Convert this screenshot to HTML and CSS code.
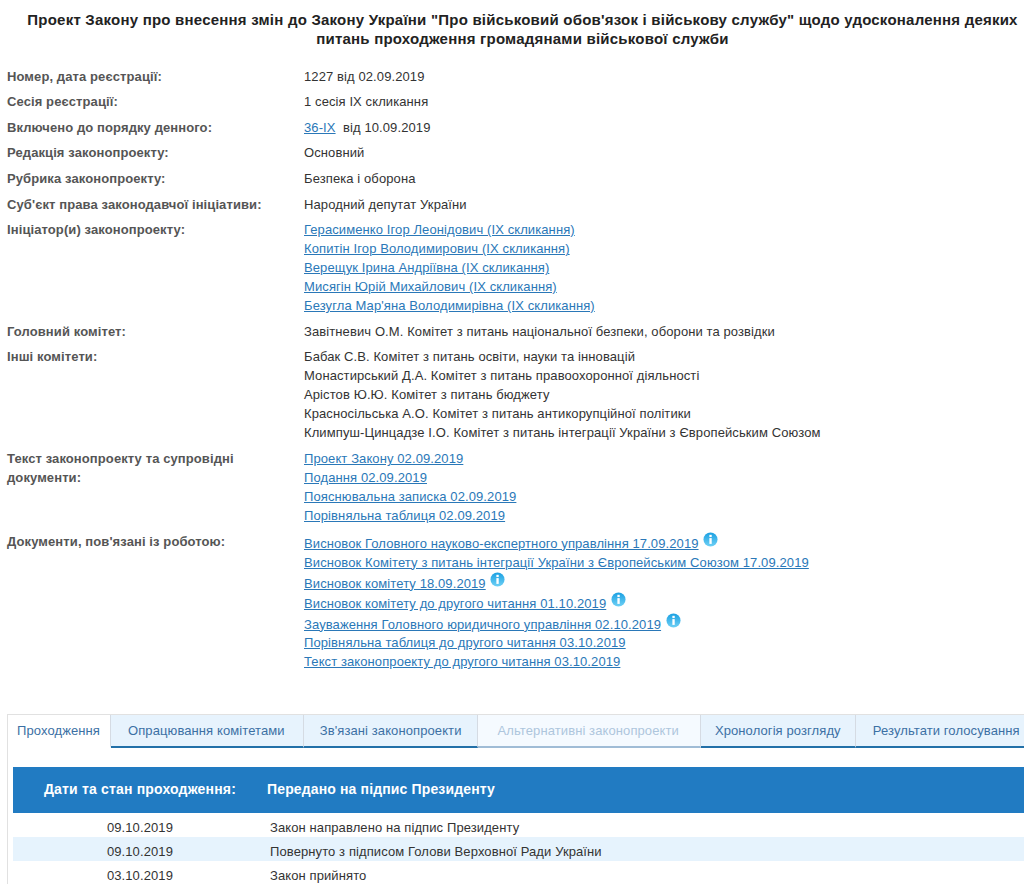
FILE: index.html
```html
<!DOCTYPE html>
<html lang="uk">
<head>
<meta charset="utf-8">
<title>Проект Закону</title>
<link rel="stylesheet" href="styles.css">
</head>
<body>
<svg class="sprite" width="0" height="0" aria-hidden="true">
  <defs>
    <linearGradient id="ig" x1="0" y1="0" x2="0" y2="1">
      <stop offset="0" stop-color="#1aa0e2"/>
      <stop offset="1" stop-color="#6fd0f5"/>
    </linearGradient>
    <symbol id="info" viewBox="0 0 16 16">
      <circle cx="8" cy="8" r="7.5" fill="url(#ig)"/>
      <rect x="6.8" y="3" width="2.5" height="2.4" fill="#fff"/>
      <rect x="6.8" y="6.5" width="2.5" height="6.2" fill="#fff"/>
    </symbol>
  </defs>
</svg>
<div class="page">
  <h1 class="title">Проект Закону про внесення змін до Закону України "Про військовий обов'язок і військову службу" щодо удосконалення деяких питань проходження громадянами військової служби</h1>
  <dl class="info">
    <div class="row"><dt>Номер, дата реєстрації:</dt><dd>1227 від 02.09.2019</dd></div>
    <div class="row"><dt>Сесія реєстрації:</dt><dd>1 сесія IX скликання</dd></div>
    <div class="row"><dt>Включено до порядку денного:</dt><dd><a href="#">36-IX</a>&nbsp; від 10.09.2019</dd></div>
    <div class="row"><dt>Редакція законопроекту:</dt><dd>Основний</dd></div>
    <div class="row"><dt>Рубрика законопроекту:</dt><dd>Безпека і оборона</dd></div>
    <div class="row"><dt>Суб'єкт права законодавчої ініціативи:</dt><dd>Народний депутат України</dd></div>
    <div class="row"><dt>Ініціатор(и) законопроекту:</dt><dd>
      <div class="line"><a href="#">Герасименко Ігор Леонідович (IX скликання)</a></div>
      <div class="line"><a href="#">Копитін Ігор Володимирович (IX скликання)</a></div>
      <div class="line"><a href="#">Верещук Ірина Андріївна (IX скликання)</a></div>
      <div class="line"><a href="#">Мисягін Юрій Михайлович (IX скликання)</a></div>
      <div class="line"><a href="#">Безугла Мар'яна Володимирівна (IX скликання)</a></div>
    </dd></div>
    <div class="row"><dt>Головний комітет:</dt><dd>Завітневич О.М. Комітет з питань національної безпеки, оборони та розвідки</dd></div>
    <div class="row"><dt>Інші комітети:</dt><dd>
      <div class="line">Бабак С.В. Комітет з питань освіти, науки та інновацій</div>
      <div class="line">Монастирський Д.А. Комітет з питань правоохоронної діяльності</div>
      <div class="line">Арістов Ю.Ю. Комітет з питань бюджету</div>
      <div class="line">Красносільська А.О. Комітет з питань антикорупційної політики</div>
      <div class="line">Климпуш-Цинцадзе І.О. Комітет з питань інтеграції України з Європейським Союзом</div>
    </dd></div>
    <div class="row"><dt>Текст законопроекту та супровідні документи:</dt><dd>
      <div class="line"><a href="#">Проект Закону 02.09.2019</a></div>
      <div class="line"><a href="#">Подання 02.09.2019</a></div>
      <div class="line"><a href="#">Пояснювальна записка 02.09.2019</a></div>
      <div class="line"><a href="#">Порівняльна таблиця 02.09.2019</a></div>
    </dd></div>
    <div class="row"><dt>Документи, пов'язані із роботою:</dt><dd>
      <div class="line"><a href="#">Висновок Головного науково-експертного управління 17.09.2019</a> <svg class="ic"><use href="#info"/></svg></div>
      <div class="line"><a href="#">Висновок Комітету з питань інтеграції України з Європейським Союзом 17.09.2019</a></div>
      <div class="line tall"><a href="#">Висновок комітету 18.09.2019</a> <svg class="ic"><use href="#info"/></svg></div>
      <div class="line tall"><a href="#">Висновок комітету до другого читання 01.10.2019</a> <svg class="ic"><use href="#info"/></svg></div>
      <div class="line tall"><a href="#">Зауваження Головного юридичного управління 02.10.2019</a> <svg class="ic"><use href="#info"/></svg></div>
      <div class="line"><a href="#">Порівняльна таблиця до другого читання 03.10.2019</a></div>
      <div class="line"><a href="#">Текст законопроекту до другого читання 03.10.2019</a></div>
    </dd></div>
  </dl>
  <section class="panel">
    <ul class="tabs">
      <li class="tab active">Проходження</li>
      <li class="tab t-comm">Опрацювання комітетами</li>
      <li class="tab t-rel">Зв'язані законопроекти</li>
      <li class="tab disabled">Альтернативні законопроекти</li>
      <li class="tab t-hist">Хронологія розгляду</li>
      <li class="tab">Результати голосування</li>
    </ul>
    <div class="status-head"><div class="sh-label">Дати та стан проходження:</div><div class="sh-value">Передано на підпис Президенту</div></div>
    <div class="srow"><div class="sdate">09.10.2019</div><div>Закон направлено на підпис Президенту</div></div>
    <div class="srow alt"><div class="sdate">09.10.2019</div><div>Повернуто з підписом Голови Верховної Ради України</div></div>
    <div class="srow"><div class="sdate">03.10.2019</div><div>Закон прийнято</div></div>
  </section>
</div>
</body>
</html>
```
FILE: styles.css
```css
html, body { margin: 0; padding: 0; height: 884px; overflow: hidden; background: #fff; }
body { font-family: "Liberation Sans", Arial, sans-serif; font-size: 13px; letter-spacing: .1px; color: #333; }
.sprite { position: absolute; }
.page { width: 1031px; margin-left: 7px; }
.title { margin: 0; padding: 10px 0 0; font-size: 15px; letter-spacing: .22px; line-height: 19px; font-weight: bold; text-align: center; color: #222; }
.info { margin: 15.4px 0 0; }
.row { display: grid; grid-template-columns: 297px 1fr; padding: 3.3px 0; line-height: 19px; }
dt { font-weight: bold; color: #555; padding-right: 20px; }
dd { margin: 0; }
a { color: #2a78b8; }
.line { min-height: 19px; }
.line.tall { height: 20.5px; }
.ic { width: 15px; height: 15px; margin-left: 1px; vertical-align: 1px; }
.panel { margin-top: 39.6px; border: 1px solid #e1e1e1; border-bottom: 0; padding: 0 0 0 5px; }
.tabs { list-style: none; margin: 0 0 0 -5px; padding: 0; display: flex; height: 33px; white-space: nowrap; }
.tab { padding: 0 17px; line-height: 32px; background: #e7f3fd; border-right: 1px solid #d5dbe3; border-bottom: 2px solid #2270a8; color: #3c70a4; }
.tab.active { padding: 0 10px 0 9px; background: #fff; border-bottom-color: transparent; }
.tab.t-comm { padding: 0 18px 0 17px; }
.tab.t-rel { padding: 0 15px 0 16px; }
.tab.disabled { padding: 0 21px 0 20px; background: #f5faff; color: #aec6dd; border-bottom-color: #a0bcd6; }
.tab.t-hist { padding: 0 14px; }
.status-head { display: flex; margin-top: 19px; height: 46px; line-height: 44px; background: #217bc2; color: #fff; font-weight: bold; font-size: 14px; letter-spacing: .18px; }
.sh-label { width: 223px; text-align: right; flex: none; }
.sh-value { margin-left: 31px; letter-spacing: .14px; }
.srow { display: flex; height: 24px; line-height: 30px; }
.srow.alt { background: #e6f3fd; }
.sdate { width: 160px; text-align: right; margin-right: 97px; flex: none; }
```
